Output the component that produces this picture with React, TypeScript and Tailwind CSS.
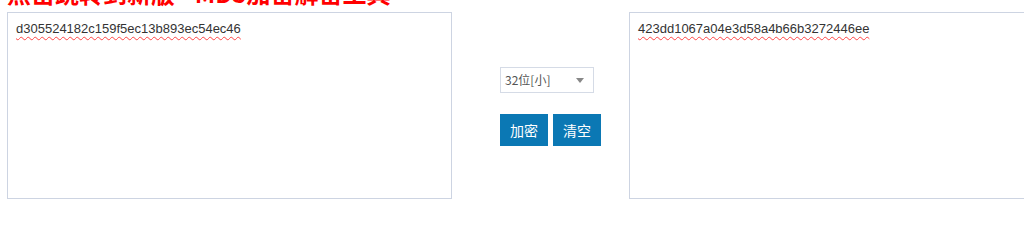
const HashBox = ({ value }: { value: string }) => {
  return (
    <div className="w-[445px] h-[187px] shrink-0 border border-[#cdd4e2] bg-white pt-[7px] px-[8px] text-[13px] leading-[18px] text-[#333] font-['Liberation_Sans',Arial,sans-serif]">
      <span className="underline decoration-wavy decoration-[#f44] decoration-1 underline-offset-[3px]">
        {value}
      </span>
    </div>
  );
};

const App = () => {
  return (
    <div className="w-[1024px] h-[219px] overflow-hidden bg-white">
      {/* Title link, scrolled partly out of view */}
      <div className="-mt-[19px] pl-[7px] h-[24px] leading-[24px] text-[24px] font-bold text-[#f00] whitespace-nowrap font-['Noto_Sans_CJK_SC',sans-serif]">
        点击跳转到新版 - MD5加密解密工具
      </div>

      <div className="flex mt-[7px] pl-[7px]">
        <HashBox value="d305524182c159f5ec13b893ec54ec46" />

        {/* Controls */}
        <div className="w-[177px] shrink-0 pl-[48px] pt-[55px]">
          <div className="w-[94px] h-[26px] border border-[#d5dbe6] flex items-center justify-between pl-[4px] pr-[9px] text-[12px] text-[#555] font-['Noto_Sans_CJK_SC',sans-serif]">
            <span>32位[小]</span>
            <span className="w-0 h-0 border-x-[4px] border-x-transparent border-t-[5px] border-t-[#888]" />
          </div>
          <div className="flex gap-[5px] mt-[21px]">
            <button className="w-[48px] h-[32px] bg-[#0b78b4] text-white text-[14px] font-['Noto_Sans_CJK_SC',sans-serif]">
              加密
            </button>
            <button className="w-[48px] h-[32px] bg-[#0b78b4] text-white text-[14px] font-['Noto_Sans_CJK_SC',sans-serif]">
              清空
            </button>
          </div>
        </div>

        <HashBox value="423dd1067a04e3d58a4b66b3272446ee" />
      </div>
    </div>
  );
};

export default App;
